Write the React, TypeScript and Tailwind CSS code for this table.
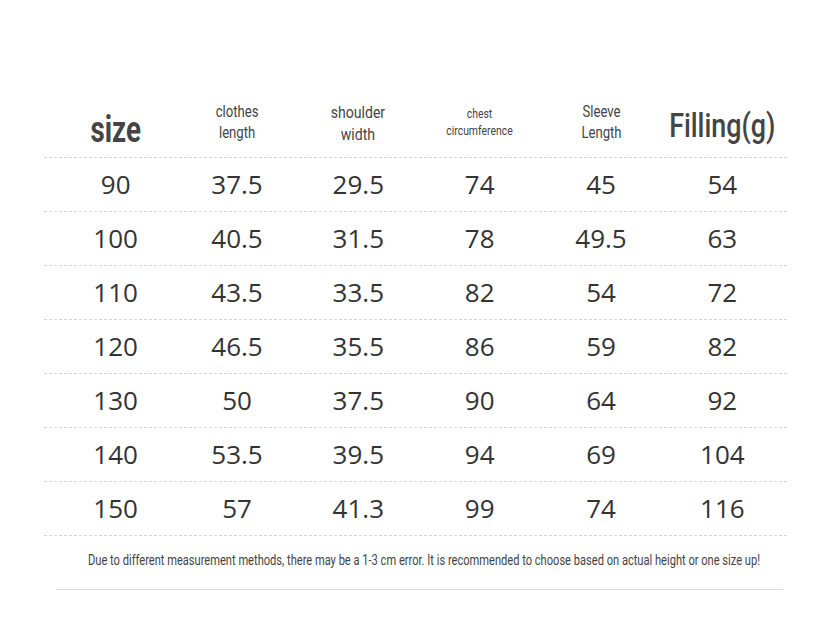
import React from "react";

const roboto = { fontFamily: "Roboto, 'Liberation Sans', sans-serif" } as React.CSSProperties;

const rows: string[][] = [
  ["90", "37.5", "29.5", "74", "45", "54"],
  ["100", "40.5", "31.5", "78", "49.5", "63"],
  ["110", "43.5", "33.5", "82", "54", "72"],
  ["120", "46.5", "35.5", "86", "59", "82"],
  ["130", "50", "37.5", "90", "64", "92"],
  ["140", "53.5", "39.5", "94", "69", "104"],
  ["150", "57", "41.3", "99", "74", "116"],
];

export default function App() {
  return (
    <div className="w-[839px] h-[630px] bg-white overflow-hidden pt-[96px]">
      <div className="ml-[44px] w-[743px]">
        <div
          className="h-[62px] border-b border-dashed border-[#d6d6d6] grid grid-cols-6 pl-[11px] pr-[4px] items-center text-center text-[#444]"
          style={roboto}
        >
          <div className="flex justify-center pt-[6px]">
            <span className="inline-block text-[36px] font-bold leading-none scale-x-[0.77]">size</span>
          </div>
          <div className="flex justify-center -mt-[10px]">
            <span className="inline-block text-[16px] leading-[21px] scale-x-[0.82]">clothes<br />length</span>
          </div>
          <div className="flex justify-center -mt-[6px]">
            <span className="inline-block text-[16px] leading-[22px] scale-x-[0.88]">shoulder<br />width</span>
          </div>
          <div className="flex justify-center -mt-[10px]">
            <span className="inline-block text-[13px] leading-[17px] scale-x-[0.8]">chest<br />circumference</span>
          </div>
          <div className="flex justify-center -mt-[10px]">
            <span className="inline-block text-[16px] leading-[21px] scale-x-[0.82]">Sleeve<br />Length</span>
          </div>
          <div className="flex justify-center -mt-[4px]">
            <span className="inline-block text-[34px] font-medium leading-none scale-x-[0.79] whitespace-nowrap">Filling(g)</span>
          </div>
        </div>
        {rows.map((r, i) => (
          <div
            key={i}
            className="h-[54px] border-b border-dashed border-[#d6d6d6] grid grid-cols-6 pl-[11px] pr-[4px] items-center text-center text-[#333] text-[26px]"
            style={{ fontFamily: "'Open Sans', 'Noto Sans', sans-serif" }}
          >
            {r.map((c, j) => (
              <div key={j}>{c}</div>
            ))}
          </div>
        ))}
        <div className="h-[48px] flex items-center justify-center pl-[18px] text-[#444]" style={roboto}>
          <span className="inline-block whitespace-nowrap text-[15px] scale-x-[0.74]">
            Due to different measurement methods, there may be a 1-3 cm error. It is recommended to choose based on actual height or one size up!
          </span>
        </div>
      </div>
      <div className="ml-[56px] w-[727px] mt-[5px] h-px bg-[#dcdcdc]" />
    </div>
  );
}
